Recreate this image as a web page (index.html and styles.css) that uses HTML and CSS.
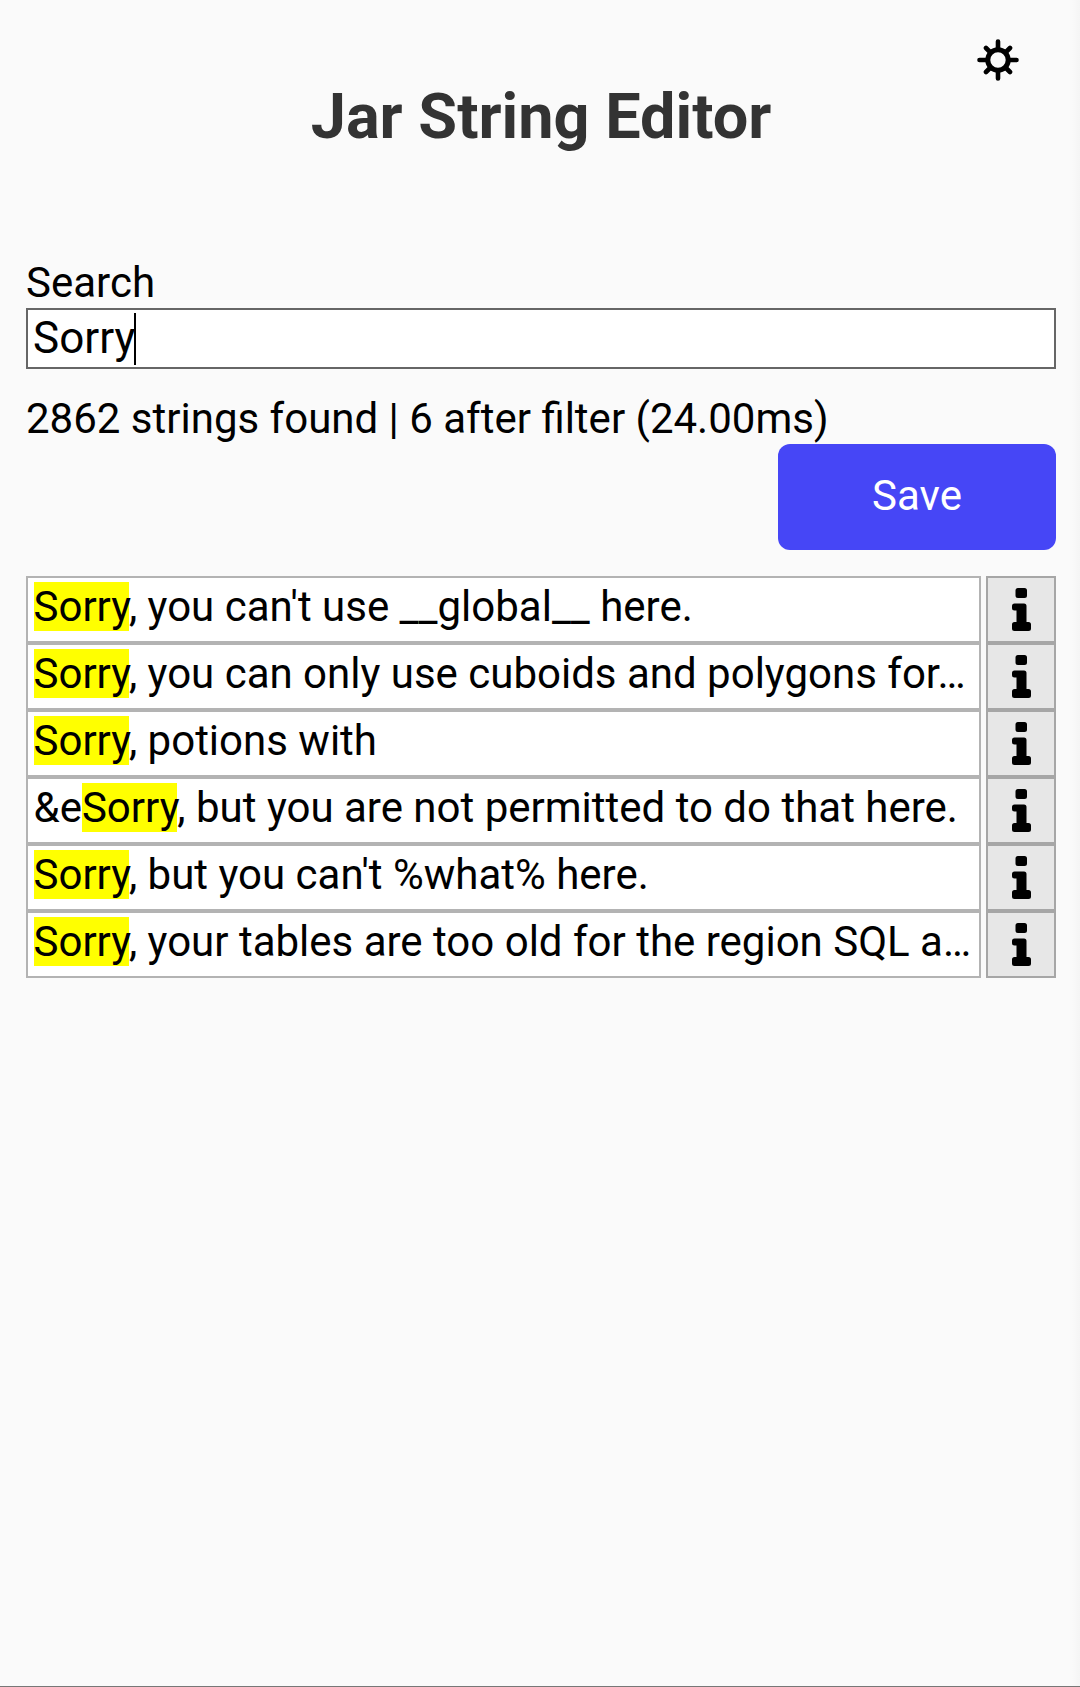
FILE: index.html
```html
<!DOCTYPE html>
<html lang="en">
<head>
    <meta charset="UTF-8">
    <meta name="viewport" content="width=device-width, initial-scale=1.0">
    <title>Jar String Editor</title>
    <link rel="stylesheet" href="styles.css">
</head>
<body>
    <!-- Shared info icon -->
    <svg class="icon-defs">
        <symbol id="info" viewBox="0 0 19 43">
            <path d="M6 0H12.500Q15 0 15 2.500V7.500Q15 10 12.500 10H6Q3.500 10 3.500 7.500V2.500Q3.500 0 6 0ZM2.500 15.500H12Q14.500 15.500 14.500 18V34H16.500Q19 34 19 36.500V40.500Q19 43 16.500 43H2.500Q0 43 0 40.500V36.500Q0 34 2.500 34H4.500V22.500H2.500Q0 22.500 0 20V18Q0 15.500 2.500 15.500Z"/>
        </symbol>
    </svg>

    <div id="app">
        <!-- Settings -->
        <div class="settings-bar">
            <svg class="gear" viewBox="0 0 42 42" aria-label="Settings">
                <circle cx="21" cy="21" r="10.200" fill="none" stroke="#000" stroke-width="5"/>
                <path d="M21 2.500V10M21 32V39.500M2.500 21H10M32 21H39.500M9 9L13.500 13.500M28.500 28.500L33 33M33 9L28.500 13.500M13.500 28.500L9 33" stroke="#000" stroke-width="4.600" stroke-linecap="round"/>
            </svg>
        </div>

        <h1>Jar String Editor</h1>

        <!-- Search -->
        <label class="search-label" for="search">Search</label>
        <div class="search-box" id="search">
            <span>Sorry</span><span class="caret"></span>
        </div>

        <p class="status">2862 strings found | 6 after filter (24.00ms)</p>

        <div class="actions">
            <button class="save-btn" type="button">Save</button>
        </div>

        <!-- Results -->
        <div class="results">
            <div class="row">
                <div class="string"><mark>Sorry</mark>, you can't use __global__ here.</div>
                <button class="info-btn" type="button"><svg class="info-icon"><use href="#info"/></svg></button>
            </div>
            <div class="row">
                <div class="string"><mark>Sorry</mark>, you can only use cuboids and polygons for…</div>
                <button class="info-btn" type="button"><svg class="info-icon"><use href="#info"/></svg></button>
            </div>
            <div class="row">
                <div class="string"><mark>Sorry</mark>, potions with</div>
                <button class="info-btn" type="button"><svg class="info-icon"><use href="#info"/></svg></button>
            </div>
            <div class="row">
                <div class="string">&amp;e<mark>Sorry</mark>, but you are not permitted to do that here.</div>
                <button class="info-btn" type="button"><svg class="info-icon"><use href="#info"/></svg></button>
            </div>
            <div class="row">
                <div class="string"><mark>Sorry</mark>, but you can't %what% here.</div>
                <button class="info-btn" type="button"><svg class="info-icon"><use href="#info"/></svg></button>
            </div>
            <div class="row">
                <div class="string"><mark>Sorry</mark>, your tables are too old for the region SQL a…</div>
                <button class="info-btn" type="button"><svg class="info-icon"><use href="#info"/></svg></button>
            </div>
        </div>
    </div>
</body>
</html>
```

FILE: styles.css
```css
/* General Styling */
html, body {
    margin: 0;
    padding: 0;
    height: 100%;
}

body {
    font-family: Roboto, sans-serif;
    background: linear-gradient(to right, #fafafa calc(100% - 8px), #f5f5f5);
    color: #000;
    box-sizing: border-box;
    height: 1687px;
    overflow: hidden;
    border-bottom: 1px solid #777;
}

.icon-defs {
    display: none;
}

#app {
    padding: 0 24px 0 26px;
}

/* Header */
.settings-bar {
    display: flex;
    justify-content: flex-end;
    padding: 39px 37px 0 0;
    height: 42px;
}

.gear {
    width: 42px;
    height: 42px;
}

h1 {
    margin: 0;
    font-size: 63px;
    line-height: 72px;
    font-weight: 700;
    color: #333;
    text-align: center;
}

/* Search */
.search-label {
    display: block;
    margin-top: 106px;
    margin-bottom: 2px;
    font-size: 42px;
    line-height: 47px;
}

.search-box {
    display: flex;
    align-items: center;
    box-sizing: border-box;
    height: 61px;
    padding: 0 5px 2px;
    border: 2px solid #666;
    background-color: #fff;
    font-size: 44px;
}

.caret {
    width: 2px;
    height: 52px;
    margin: 2px 0 0 -1px;
    background-color: #000;
}

.status {
    margin: 26px 0 0;
    font-size: 42px;
    line-height: 47px;
}

/* Save */
.actions {
    display: flex;
    justify-content: flex-end;
    margin-top: 2px;
}

.save-btn {
    width: 278px;
    height: 106px;
    padding: 0 0 4px;
    border: none;
    border-radius: 12px;
    background-color: #4646f6;
    color: #fff;
    font-family: inherit;
    font-size: 42px;
}

/* Results */
.results {
    margin-top: 26px;
}

.row {
    display: flex;
    gap: 5px;
    height: 67px;
}

.string {
    flex: 1;
    min-width: 0;
    box-sizing: border-box;
    padding: 0 5.5px;
    border: 2px solid #b3b3b3;
    background-color: #fff;
    font-size: 42px;
    line-height: 58px;
    white-space: nowrap;
    overflow: hidden;
}

mark {
    background-color: #ffff00;
    color: #000;
}

.info-btn {
    display: flex;
    align-items: center;
    justify-content: center;
    flex: none;
    box-sizing: border-box;
    width: 70px;
    padding: 0;
    border: 2px solid #a6a6a6;
    background-color: #e7e7e7;
}

.info-icon {
    width: 19px;
    height: 43px;
}
```
